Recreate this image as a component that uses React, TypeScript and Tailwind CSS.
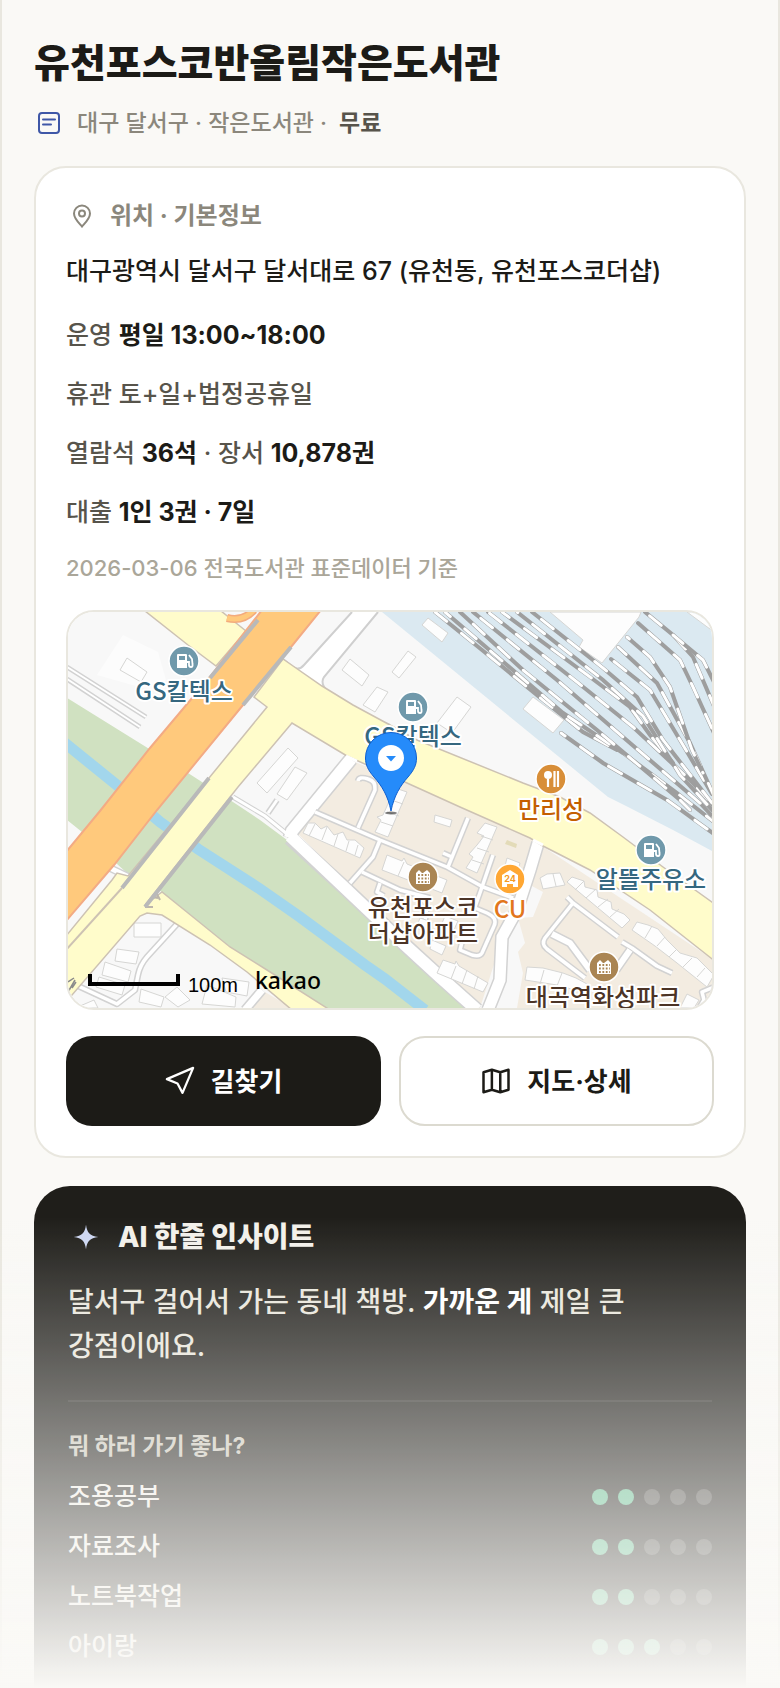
import type { ReactNode } from 'react';

const facts: { label: string; body: ReactNode }[] = [
  { label: '운영', body: <Strong>평일 13:00~18:00</Strong> },
  { label: '휴관', body: '토+일+법정공휴일' },
  {
    label: '열람석',
    body: (
      <>
        <Strong>36석</Strong> · 장서 <Strong>10,878권</Strong>
      </>
    ),
  },
  { label: '대출', body: <Strong>1인 3권 · 7일</Strong> },
];

const scores = [
  { label: '조용공부', score: 2 },
  { label: '자료조사', score: 2 },
  { label: '노트북작업', score: 2 },
  { label: '아이랑', score: 3 },
];

function Strong({ children }: { children: ReactNode }) {
  return <b className="font-bold text-[#1c1b17]">{children}</b>;
}

// ---- map data (drawn in the map's own coordinate space) ----

const rails = [
  'M435,612 L482,650 L543,700 L583,732 L617,750',
  'M445,612 L563,713 L623,753 L677,793 L714,822',
  'M460,612 L523,670 L597,730 L680,800 L690,810',
  'M473,612 L557,680 L623,737 L700,803 L714,818',
  'M488,612 L577,682 L633,727 L690,780 L714,806',
  'M502,612 L590,677 L630,707 L650,735 L673,763',
  'M517,612 L603,680 L643,716 L680,775 L714,812',
  'M532,612 L603,668 L637,697 L663,740 L712,803',
  'M611,659 L650,690 L680,740 L712,794',
  'M618,647 L657,683 L690,743 L714,796',
  'M627,637 L650,657 L670,687 L692,750 L703,773',
  'M638,623 L680,660 L693,687 L714,733',
  'M645,612 L673,635 L693,657 L714,706',
  'M673,635 L703,660 L714,682',
  'M561,733 L603,763 L667,800 L714,834',
];

const buildings = [
  '127,658 147,672 141,682 120,670',
  '288,748 298,758 267,793 257,783',
  '295,767 307,773 287,800 277,794',
  '350,659 369,675 362,686 342,670',
  '377,687 388,692 375,712 363,705',
  '428,618 448,633 442,642 422,625',
  '408,651 416,657 399,678 392,672',
  '457,697 471,707 452,733 437,723',
  '533,697 564,720 553,733 523,709',
  '550,612 641,612 639,617 602,663 579,647 583,640',
  '687,612 714,612 714,632',
  // beige quarter
  '395,788 407,792 388,837 375,832 381,820 377,817 383,815',
  '435,815 452,820 450,827 434,822',
  '485,823 497,827 477,873 466,868 473,857 469,854 477,845 484,836 477,833',
  '507,858 520,863 518,870 505,866',
  '303,833 308,823 315,823 321,829 327,826 334,835 343,832 347,840 355,840 364,848 360,858',
  '387,855 402,861 404,858 407,864 447,880 442,893 382,870',
  '432,940 446,946 442,955 430,949',
  '443,960 455,964 456,961 459,966 488,983 483,992 437,973',
  '420,918 432,922 428,932 416,928',
  '445,916 458,921 452,934 440,928',
  '540,878 547,874 560,873 565,885 543,889',
  '567,882 572,877 584,881 585,887 597,890 598,897 611,902 612,909 624,914 630,920 622,928',
  '632,930 637,922 648,925 658,929 667,940 680,953 697,958 714,975 707,987 692,975 677,963 655,946',
  '527,967 543,968 563,973 576,978 587,984 582,992 557,985 525,980',
  '687,994 699,1000 694,1008 680,1008',
  // south-west quarter
  '134,923 161,923 161,937 134,937',
  '117,949 139,952 136,964 115,961',
  '105,962 131,971 128,982 102,975',
  '99,977 125,985 122,995 96,987',
  '141,989 164,997 161,1007 139,1002',
  '177,987 190,1000 178,1007 165,997',
  '207,985 236,997 235,1007 202,1004',
  '222,978 249,982 247,996 226,992',
  '80,1006 94,1000 98,1008 80,1008',
];

const walls =
  'M309,836 l6,-12 M322,840 l5,-13 M334,846 l4,-12 M346,851 l3,-10 M355,855 l3,-10 M391,800 l12,4 M387,812 l12,4 M381,822 l12,4 M481,836 l12,4 M477,848 l12,4 M472,860 l12,4 M398,876 l6,-14 M451,979 l5,-13 M462,984 l5,-14 M474,989 l4,-13 M553,874 l3,12 M575,890 l9,-9 M586,898 l10,-9 M598,907 l10,-8 M610,917 l9,-8 M645,938 l7,-12 M657,946 l8,-9 M669,957 l8,-8 M683,967 l9,-9 M697,977 l8,-9 M540,984 l4,-14 M557,986 l5,-13';

const lanes = [
  'M315,812 L380,840 L447,867 L483,887 L513,898',
  'M380,840 L373,857 L350,883',
  'M358,828 L375,790 Q376,781 368,779 Q359,776 358,781',
  'M362,872 L400,890 L430,898',
  'M380,883 L377,892 L384,896',
  'M422,898 L427,905 L424,930',
  'M448,867 L468,818',
  'M452,857 L443,853',
  'M493,855 L482,887 L475,907',
  'M475,908 L487,913 Q498,918 494,926 L482,953 Q480,957 472,955 L460,950 L462,942',
  'M567,897 L573,903 L618,937',
  'M573,903 L545,938 Q541,944 547,949 L585,978',
  'M622,942 L632,948 L657,966 L672,973',
  'M714,987 L702,992 L704,1000 L698,1010',
  'M178,923 L147,957 Q140,965 138,975 L135,990 L117,1004 L76,985',
];

function Casing({ d, width }: { d: string; width: number }) {
  return (
    <>
      <path d={d} fill="none" stroke="#d2d2d2" strokeWidth={width + 3} />
      <path d={d} fill="none" stroke="#fff" strokeWidth={width} />
    </>
  );
}

function PlaceLabel({ x, y, color, children }: { x: number; y: number; color: string; children: string }) {
  return (
    <text
      x={x}
      y={y}
      textAnchor="middle"
      fill={color}
      stroke="#fff"
      strokeWidth="4"
      strokeLinejoin="round"
      paintOrder="stroke"
      className="font-['Noto_Sans_CJK_KR',sans-serif] text-2xl font-medium"
    >
      {children}
    </text>
  );
}

function Disc({ x, y, color, children }: { x: number; y: number; color: string; children: ReactNode }) {
  return (
    <g transform={`translate(${x} ${y})`}>
      <circle r="15" fill={color} stroke="#fff" strokeWidth="1.5" />
      {children}
    </g>
  );
}

function Fuel({ x, y }: { x: number; y: number }) {
  return (
    <Disc x={x} y={y} color="#7099ab">
      <path d="M-7,-6 Q-7,-7 -6,-7 H2 Q3,-7 3,-6 V7 H-7 Z" fill="#fff" />
      <path d="M-5,-5 H1 V-1 H-5 Z" fill="#7099ab" />
      <path d="M3,1 H5 V4 Q5,6 7,6 Q9,6 8.500,3 L8,-2 L5,-6" fill="none" stroke="#fff" strokeWidth="1.8" />
    </Disc>
  );
}

function Apartment({ x, y }: { x: number; y: number }) {
  return (
    <Disc x={x} y={y} color="#aa8553">
      <path d="M-7,7 V-4 L-4,-7 L-1,-4 L0,-4 L4,-7 L7,-4 V7 Z" fill="#fff" />
      <path
        d="M-5,-2 H6 M-5,1.500 H6 M-5,5 H6"
        stroke="#aa8553"
        strokeWidth="1.800"
        strokeDasharray="1.800 1.600"
      />
    </Disc>
  );
}

function LibraryMap() {
  return (
    <svg viewBox="68 612 644 396" className="block w-full" role="img" aria-label="지도">
      <rect x="68" y="612" width="644" height="396" fill="#f8f8f8" />
      <path d="M97,675 L123,635 L158,652 L166,680 L150,690 Z" fill="#fcfcfc" />
      <polygon points="382,612 714,612 714,852 673,830 628,807 608,797" fill="#dbe9f1" />
      <polygon points="355,762 407,783 530,838 714,960 714,1008 480,1008 350,885 297,833" fill="#f3ece1" />
      <polygon points="247,1008 265,992 292,1008" fill="#f3ece1" />
      <polygon
        points="530,885 543,892 533,917 518,918 525,943 518,952 523,973 517,1008 480,1008 505,930"
        fill="#f8f8f8"
      />
      <polygon
        points="67,698 188,773 233,802 260,820 287,840 345,893 400,947 443,985 465,1008 325,1008 267,970 230,947 193,917 162,892 128,874 82,832 67,820"
        fill="#d0e1c1"
      />
      <path
        d="M60,739 L118,786 L160,822 L198,849 L260,889 L300,917 L365,965 L385,979 L425,1010"
        fill="none"
        stroke="#a2d6ec"
        strokeWidth="11"
      />

      {/* white streets */}
      <polygon points="352,612 378,612 323,680 327,695 283,659 293,668 304,666" fill="#fff" />
      <path
        d="M283,659 L293,667 Q299,671 304,665 L352,612 M378,612 L324,677 Q320,683 327,691 L373,718 L390,725"
        fill="none"
        stroke="#cfcfcf"
        strokeWidth="2"
      />
      <path d="M351,759 L292,831 L290,838 M290,838 L347,890 L405,945 L440,977 L477,1010" fill="none" stroke="#d2d2d2" strokeWidth="15" />
      <path d="M233,797 L265,816 L292,838" fill="none" stroke="#d2d2d2" strokeWidth="5" />
      <path d="M351,759 L292,831 L290,838 M290,836 L347,890 L405,945 L440,977 L477,1010" fill="none" stroke="#fff" strokeWidth="12" />
      <path d="M233,797 L265,816 L292,838" fill="none" stroke="#fff" strokeWidth="3" />
      <Casing d="M538,843 L530,870 L517,910 L502,937 L500,980 L488,1010" width={11} />
      <Casing d="M262,990 L245,1010" width={7} />
      <Casing d="M67,667 L146,717 M67,679 L140,727" width={2} />
      <Casing d="M277,800 L268,813" width={3} />
      <Casing d="M110,868 L135,880" width={5} />
      <path d="M552,934 L570,943 L590,970 M630,950 L616,970" fill="none" stroke="#d2d2d2" strokeWidth="9" />
      {lanes.map((d) => (
        <path key={d} d={d} fill="none" stroke="#d2d2d2" strokeWidth="6.500" strokeLinejoin="round" />
      ))}
      {lanes.map((d) => (
        <path key={d} d={d} fill="none" stroke="#fff" strokeWidth="3.500" strokeLinejoin="round" />
      ))}
      <path d="M552,934 L570,943 L590,970 M630,950 L616,970" fill="none" stroke="#fff" strokeWidth="6" />

      {buildings.map((points) => (
        <polygon key={points} points={points} fill="#fdfdfd" stroke="#d6d6d4" strokeWidth="1" />
      ))}
      <path d={walls} stroke="#d6d6d4" strokeWidth="1" />
      <polygon points="507,840 517,844 516,848 505,844" fill="#e3dbb8" />

      {/* rail yard */}
      <g fill="none">
        {rails.map((d, i) => (
          <g key={d}>
            <path d={d} stroke="#9e9e9e" strokeWidth="4" strokeLinecap="round" />
            <path
              d={d}
              stroke="#fff"
              strokeWidth="3"
              strokeLinecap="round"
              strokeDasharray="15 19"
              strokeDashoffset={i * 8}
            />
          </g>
        ))}
      </g>

      {/* yellow roads */}
      <g fill="#fffccb" stroke="#cdc2b3" strokeWidth="1.500">
        <polygon points="145,611 221,611 246,631 216,666 188,645" />
        <polygon points="283,659 322,686 353,705 390,725 417,740 523,783 560,797 590,813 623,837 663,867 716,905 716,962 650,910 590,870 543,846 530,838 460,807 407,783 347,756 292,723 238,787 145,905 162,892 193,917 230,947 267,970 330,1010 292,1010 247,972 210,945 162,915 147,913 140,916 66,1002 66,936 112,880 117,873 128,876 209,778 267,707 254,697" />
      </g>
      <path d="M122,888 L66,950" stroke="#cdc2b3" strokeWidth="2" />
      <path d="M152,897 L158,898 M156,892 L160,900 M145,907 L153,907" stroke="#bdb6ac" strokeWidth="2" />
      <path d="M209,778 L122,888 M232,797 L145,907" stroke="#b9b9b9" strokeWidth="4" />
      <path d="M68,982 l6,-4 M68,992 l7,-12 M72,988 l4,-6" stroke="#8b8b8b" strokeWidth="1.500" />
      {/* street mouths */}
      <path d="M346,756 L357,761 M533,840 L543,845" stroke="#fff" strokeWidth="3" />

      {/* expressway */}
      <path d="M227,618 Q243,622 254,610" fill="none" stroke="#f3ab7d" strokeWidth="8" />
      <path d="M227,618 Q243,622 254,610" fill="none" stroke="#ffc97c" strokeWidth="5" />
      <polygon
        points="262,610 321,610 291,647 243,705 157,810 114,865 66,921 66,852 100,811 150,748 209,678"
        fill="#ffc97c"
        stroke="#f3ab84"
        strokeWidth="2"
      />
      <path d="M258,620 L210,678 M291,647 L243,705" stroke="#b9b9b9" strokeWidth="4" />

      {/* places */}
      <Fuel x={184} y={661} />
      <PlaceLabel x={184} y={700} color="#35677f">GS칼텍스</PlaceLabel>
      <Fuel x={413} y={707} />
      <PlaceLabel x={413} y={745} color="#35677f">GS칼텍스</PlaceLabel>
      <Disc x={551} y={779} color="#d88e38">
        <circle cx="-3" cy="-4" r="4" fill="#fff" />
        <path d="M-3,0 V8 M3.500,-8 V8 M7,-8 V8" stroke="#fff" strokeWidth="2.200" />
      </Disc>
      <PlaceLabel x={551} y={818} color="#c45f00">만리성</PlaceLabel>
      <Fuel x={651} y={850} />
      <PlaceLabel x={651} y={888} color="#35677f">알뜰주유소</PlaceLabel>
      <Apartment x={423} y={877} />
      <PlaceLabel x={423} y={916} color="#4c3426">유천포스코</PlaceLabel>
      <PlaceLabel x={423} y={942} color="#4c3426">더샵아파트</PlaceLabel>
      <Disc x={510} y={879} color="#ffa733">
        <path d="M0,-9 L8,-4 V8 H3 V5 H-3 V8 H-8 V-4 Z" fill="#fff" />
        <text y="3" textAnchor="middle" fill="#f59a22" className="font-['Inter',sans-serif] text-[9px] font-bold">
          24
        </text>
      </Disc>
      <PlaceLabel x={510} y={918} color="#e2761c">CU</PlaceLabel>
      <Apartment x={604} y={967} />
      <PlaceLabel x={603} y={1006} color="#4c3426">대곡역화성파크</PlaceLabel>

      {/* library pin */}
      <ellipse cx="391" cy="813" rx="6" ry="1.500" fill="#00000080" />
      <path
        d="M391,811 C388,796 382,786 374,777 C368,770 365.500,765 365.500,758 A25.500,25.500 0 0 1 416.500,758 C416.500,765 414,770 408,777 C400,786 394,796 391,811 Z"
        fill="#258bfa"
        stroke="#0d5fd0"
        strokeWidth="1"
      />
      <circle cx="391" cy="758" r="13" fill="#fff" />
      <path d="M386,756 H396 L391,761.500 Z" fill="#258bfa" />

      <path d="M90,974 V984 H178 V974" fill="none" stroke="#000" strokeWidth="4" />
      <text x="188" y="992" className="font-['Liberation_Sans',sans-serif] text-xl font-normal">100m</text>
      <text x="255" y="989" className="font-['Noto_Sans',sans-serif] text-[23px] font-medium">kakao</text>
    </svg>
  );
}

function Dots({ score }: { score: number }) {
  return (
    <span className="flex gap-[10px]" role="img" aria-label={`${score}/5`}>
      {[1, 2, 3, 4, 5].map((n) => (
        <span key={n} className={n <= score ? 'size-4 rounded-full bg-[#5bba8c]' : 'size-4 rounded-full bg-white/20'} />
      ))}
    </span>
  );
}

export default function App() {
  return (
    <main className="flex min-h-screen flex-col border-x-2 border-[#e9e7df] bg-[#faf9f6] px-8 pt-9 font-['Inter','Noto_Sans_CJK_KR',sans-serif] font-medium text-[#1c1b17]">
      <h1 className="text-[39px] leading-[54px] font-extrabold">유천포스코반올림작은도서관</h1>
      <p className="mt-4 flex items-center text-[23px] leading-[34px] text-[#8b877c]">
        <svg viewBox="0 0 24 24" className="ml-[3px] mr-4 size-6 text-[#3f57a7]" fill="none" stroke="currentColor" strokeWidth="2">
          <rect x="2" y="2" width="20" height="20" rx="3" />
          <path d="M6 8.500h12M6 13.500h8" strokeLinecap="round" />
        </svg>
        대구 달서구 · 작은도서관 ·<b className="ml-3 font-semibold text-[#57544b]">무료</b>
      </p>

      <section className="mt-[26px] rounded-[32px] border-2 border-[#e9e7df] bg-white p-[30px]">
        <h2 className="flex items-center gap-4 text-2xl leading-9 font-bold text-[#8b877c]">
          <svg viewBox="0 0 24 24" className="ml-1 size-6" fill="none" stroke="currentColor" strokeWidth="2">
            <path d="M12 22.500C8.500 18.500 4 14.500 4 9.500a8 8 0 0 1 16 0c0 5-4.500 9-8 13Z" />
            <circle cx="12" cy="9.500" r="3" />
          </svg>
          위치 · 기본정보
        </h2>
        <p className="mt-4 text-[25px] leading-[42px]">대구광역시 달서구 달서대로 67 (유천동, 유천포스코더샵)</p>
        <ul className="mt-6 flex flex-col gap-5 text-[25px] leading-[39px] text-[#57544b]">
          {facts.map((f) => (
            <li key={f.label}>
              {f.label} {f.body}
            </li>
          ))}
        </ul>
        <p className="mt-5 text-[22px] leading-8 text-[#aaa699]">2026-03-06 전국도서관 표준데이터 기준</p>
        <div className="mt-[26px] overflow-hidden rounded-[28px] border-2 border-[#e9e7df]">
          <LibraryMap />
        </div>
        <div className="mt-[26px] grid grid-cols-2 gap-[18px] text-[26px] font-bold">
          <a href="#route" className="flex h-[90px] items-center justify-center gap-4 rounded-[26px] bg-[#1c1b17] text-white">
            <svg viewBox="0 0 24 24" className="size-[30px]" fill="none" stroke="currentColor" strokeWidth="1.800" strokeLinejoin="round">
              <path d="M1.500 10.500 22.500 1.500 14 21.500 10 14Z" />
            </svg>
            길찾기
          </a>
          <a href="#detail" className="flex h-[90px] items-center justify-center gap-4 rounded-[26px] border-2 border-[#dcdad0]">
            <svg viewBox="0 0 24 24" className="size-[30px]" fill="none" stroke="currentColor" strokeWidth="2" strokeLinejoin="round">
              <path d="m2 5 6.700-2 6.700 2L22 3v16l-6.600 2-6.700-2L2 21ZM8.700 3v16M15.400 5v16" />
            </svg>
            지도·상세
          </a>
        </div>
      </section>

      <section className="mt-7 flex-1 rounded-t-[36px] bg-[#1f1e1a] px-[34px] pt-[30px] text-[#f3f1eb]">
        <h2 className="flex items-center gap-[18px] text-[28px] leading-[42px] font-extrabold">
          <svg viewBox="0 0 24 24" className="ml-1 size-7 text-[#cdd7f3]" fill="currentColor">
            <path d="M12 1.500c1 7.200 3.300 9.300 10.500 10.500-7.200 1.200-9.500 3.300-10.500 10.500-1-7.200-3.300-9.300-10.500-10.500 7.200-1.200 9.500-3.300 10.500-10.500Z" />
          </svg>
          AI 한줄 인사이트
        </h2>
        <p className="mt-[22px] text-[28px] leading-[44px] break-keep text-[#e9e6dc]">
          달서구 걸어서 가는 동네 책방. <b className="font-bold text-white">가까운 게</b> 제일 큰 강점이에요.
        </p>
        <div className="mt-8 border-t-2 border-white/8 pt-7">
          <h3 className="text-[23px] leading-[32px] font-bold text-[#c9c5b9]">뭐 하러 가기 좋나?</h3>
          <ul className="mt-[10px] text-[25px]">
            {scores.map((s) => (
              <li key={s.label} className="flex h-[50px] items-center justify-between">
                {s.label}
                <Dots score={s.score} />
              </li>
            ))}
          </ul>
        </div>
      </section>

      <div className="pointer-events-none fixed inset-x-0 bottom-0 h-[28vh] bg-linear-to-b from-[#faf9f6]/0 to-[#faf9f6]" />
    </main>
  );
}
